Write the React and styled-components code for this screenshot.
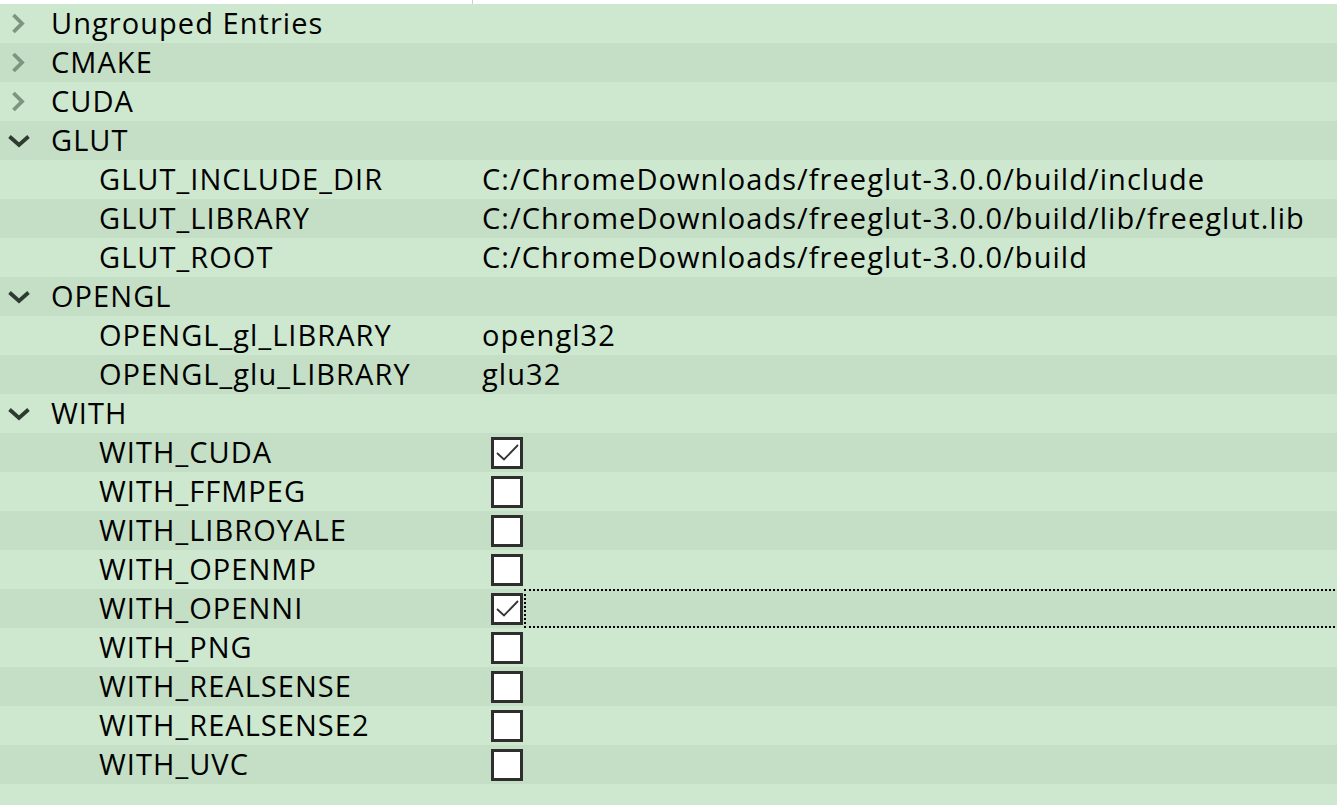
import React from "react";
import styled, { createGlobalStyle } from "styled-components";

const Global = createGlobalStyle`
  html, body { margin: 0; padding: 0; background: #cde8cf; }
  body { font-family: "Open Sans", "Noto Sans", sans-serif; overflow: hidden; }
`;

const Page = styled.div`
  width: 1337px;
  height: 805px;
  background: #cde8cf;
  overflow: hidden;
`;

const Header = styled.div`
  height: 4px;
  background: #ffffff;
  display: flex;
`;

const HeaderCell = styled.div`
  width: 472px;
  border-right: 1px solid #cfcfcf;
`;

const Row = styled.div`
  height: 39px;
  display: flex;
  align-items: center;
  background: ${(p) => (p.$odd ? "#c4dfc5" : "#cde8cf")};
  overflow: hidden;
  color: #000;
  font-size: 29px;
  letter-spacing: 1.05px;
  white-space: nowrap;
`;

const Toggle = styled.div`
  width: 51px;
  height: 39px;
  display: flex;
  align-items: center;
  padding-left: ${(p) => (p.$open ? "7px" : "10px")};
  box-sizing: border-box;
  flex-shrink: 0;
`;

const NameCell = styled.div`
  width: ${(p) => (p.$child ? "373px" : "421px")};
  padding-left: ${(p) => (p.$child ? "99px" : "0")};
  flex-shrink: 0;
  line-height: 39px;
  margin-top: -3px;
`;

const ValueCell = styled.div`
  flex: 1;
  display: flex;
  align-items: center;
  height: 39px;
  padding-left: 10px;
  line-height: 39px;
  margin-top: ${(p) => (p.$text ? "-3px" : "0")};
`;

const Box = styled.div`
  width: 32px;
  height: 32px;
  margin-left: 9px;
  box-sizing: border-box;
  border: 3px solid #2e2e2e;
  background: #ffffff;
  display: flex;
  align-items: center;
  justify-content: center;
  flex-shrink: 0;
`;

const Focus = styled.div`
  flex: 1;
  height: 39px;
  box-sizing: border-box;
  border: 2px dotted #000;
  margin-right: -10px;
  margin-left: 1px;
`;

const ChevronRight = () => (
  <svg width="16" height="24" viewBox="0 0 16 24">
    <path d="M3.5 3 L12 11.5 L3.5 20" fill="none" stroke="#7d957f" strokeWidth="3.8" />
  </svg>
);

const ChevronDown = () => (
  <svg width="24" height="14" viewBox="0 0 24 14">
    <path d="M2.5 2.5 L12 11 L21.5 2.5" fill="none" stroke="#2f3a30" strokeWidth="3.8" />
  </svg>
);

const Check = () => (
  <svg width="26" height="26" viewBox="0 0 26 26">
    <path d="M3 13 L10 19.5 L24 5" fill="none" stroke="#333" strokeWidth="1.8" />
  </svg>
);

const rows = [
  { type: "group", name: "Ungrouped Entries" },
  { type: "group", name: "CMAKE" },
  { type: "group", name: "CUDA" },
  { type: "group", name: "GLUT", open: true },
  { type: "text", name: "GLUT_INCLUDE_DIR", value: "C:/ChromeDownloads/freeglut-3.0.0/build/include" },
  { type: "text", name: "GLUT_LIBRARY", value: "C:/ChromeDownloads/freeglut-3.0.0/build/lib/freeglut.lib" },
  { type: "text", name: "GLUT_ROOT", value: "C:/ChromeDownloads/freeglut-3.0.0/build" },
  { type: "group", name: "OPENGL", open: true },
  { type: "text", name: "OPENGL_gl_LIBRARY", value: "opengl32" },
  { type: "text", name: "OPENGL_glu_LIBRARY", value: "glu32" },
  { type: "group", name: "WITH", open: true },
  { type: "bool", name: "WITH_CUDA", checked: true },
  { type: "bool", name: "WITH_FFMPEG" },
  { type: "bool", name: "WITH_LIBROYALE" },
  { type: "bool", name: "WITH_OPENMP" },
  { type: "bool", name: "WITH_OPENNI", checked: true, focus: true },
  { type: "bool", name: "WITH_PNG" },
  { type: "bool", name: "WITH_REALSENSE" },
  { type: "bool", name: "WITH_REALSENSE2" },
  { type: "bool", name: "WITH_UVC" },
];

export default function App() {
  return (
    <Page>
      <Global />
      <Header>
        <HeaderCell />
      </Header>
      {rows.map((r, i) => (
        <Row key={r.name} $odd={i % 2 === 1}>
          {r.type === "group" ? (
            <>
              <Toggle $open={r.open}>{r.open ? <ChevronDown /> : <ChevronRight />}</Toggle>
              <NameCell>{r.name}</NameCell>
              <ValueCell />
            </>
          ) : (
            <>
              <NameCell $child>{r.name}</NameCell>
              {r.type === "text" ? (
                <ValueCell $text>{r.value}</ValueCell>
              ) : (
                <ValueCell>
                  <Box>{r.checked && <Check />}</Box>
                  {r.focus && <Focus />}
                </ValueCell>
              )}
            </>
          )}
        </Row>
      ))}
    </Page>
  );
}
